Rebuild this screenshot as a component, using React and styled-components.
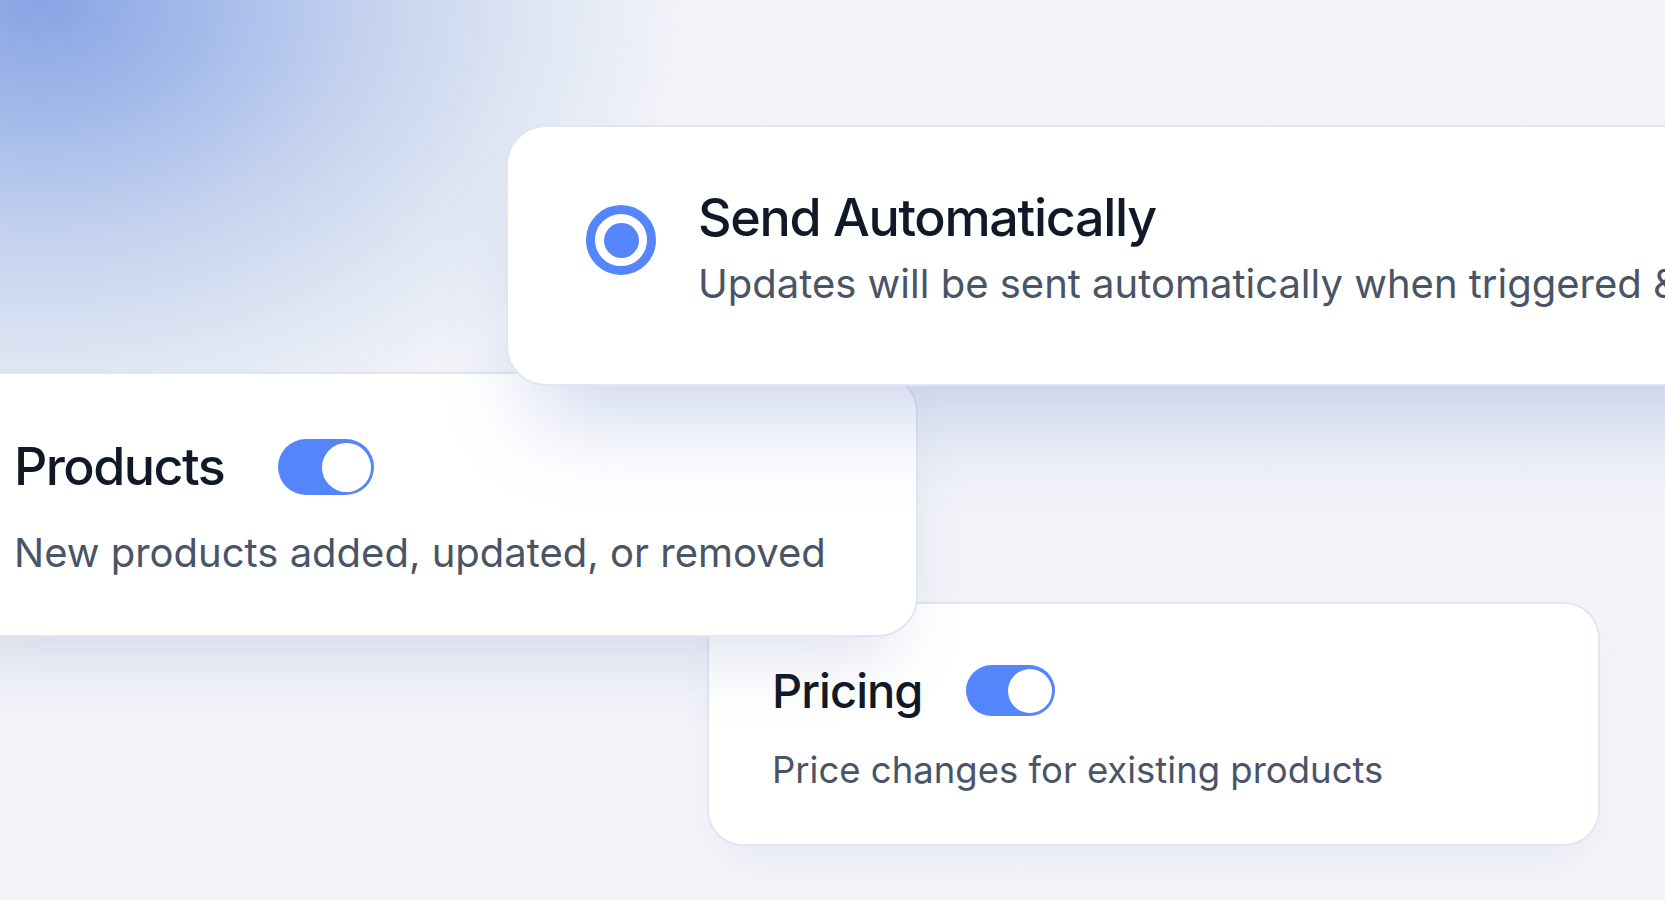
import React from "react";
import styled, { createGlobalStyle } from "styled-components";

const Global = createGlobalStyle`
  html, body { margin: 0; padding: 0; overflow: hidden; }
  body { font-family: Inter, "Noto Sans", sans-serif; }
  * { box-sizing: border-box; }
`;

const Stage = styled.main`
  width: 100vw;
  height: 900px;
  overflow: hidden;
  display: flex;
  flex-direction: column;
  align-items: flex-start;
  background:
    radial-gradient(ellipse 640px 470px at 40px 0px, #87a4e4 0%, #a4bbea 26%, #c6d3ef 52%, #dfe6f3 78%, rgba(238,241,247,0) 100%),
    linear-gradient(180deg, #f1f3f8 0%, #f2f4f8 100%);
`;

const Card = styled.section`
  position: relative;
  z-index: ${(p) => p.$layer};
  flex: none;
  margin-top: ${(p) => p.$top}px;
  margin-left: ${(p) => p.$left}px;
  width: ${(p) => p.$width}px;
  height: ${(p) => p.$height}px;
  padding: ${(p) => p.$padTop}px 0 0 ${(p) => p.$padLeft}px;
  background: #ffffff;
  border: 2px solid #e1e6f1;
  border-radius: ${(p) => p.$radius}px;
  box-shadow: ${(p) => p.$shadow};
`;

const OptionRow = styled.div`
  display: flex;
  align-items: flex-start;
  gap: 42px;
`;

const Radio = styled.span`
  flex: none;
  margin-top: 13px;
  width: 70px;
  height: 70px;
  border-radius: 50%;
  border: 9px solid #5585fb;
  display: flex;
  align-items: center;
  justify-content: center;
  &::after {
    content: "";
    width: 35px;
    height: 35px;
    border-radius: 50%;
    background: #5585fb;
  }
`;

const TextCol = styled.div`
  display: flex;
  flex-direction: column;
`;

const Title = styled.h2`
  margin: 0;
  font-family: Inter, "Noto Sans", sans-serif;
  font-size: ${(p) => p.$size}px;
  line-height: 1;
  font-weight: 500;
  letter-spacing: ${(p) => p.$track}em;
  color: #111827;
  white-space: nowrap;
`;

const Desc = styled.p`
  margin: ${(p) => p.$gap}px 0 0;
  font-family: Inter, "Noto Sans", sans-serif;
  font-size: ${(p) => p.$size}px;
  line-height: 1;
  font-weight: 400;
  color: #4a5467;
  white-space: nowrap;
`;

const HeadRow = styled.div`
  display: flex;
  align-items: center;
  gap: ${(p) => p.$gap}px;
`;

const Toggle = styled.span`
  flex: none;
  position: relative;
  width: ${(p) => p.$w}px;
  height: ${(p) => p.$h}px;
  border-radius: 999px;
  background: #5585fb;
  &::after {
    content: "";
    position: absolute;
    top: 4px;
    right: 3px;
    width: ${(p) => p.$h - 7}px;
    height: ${(p) => p.$h - 7}px;
    border-radius: 50%;
    background: #ffffff;
  }
`;

export default function App() {
  return (
    <>
      <Global />
      <Stage>
        <Card
          $layer={3}
          $top={125}
          $left={506}
          $width={1300}
          $height={261}
          $padTop={65}
          $padLeft={78}
          $radius={40}
          $shadow="0 60px 90px -30px rgba(84, 116, 196, 0.30)"
        >
          <OptionRow>
            <Radio />
            <TextCol>
              <Title $size={52} $track={-0.025}>Send Automatically</Title>
              <Desc $size={40} $gap={20}>
                Updates will be sent automatically when triggered &amp; approved
              </Desc>
            </TextCol>
          </OptionRow>
        </Card>

        <Card
          $layer={2}
          $top={-14}
          $left={-60}
          $width={978}
          $height={265}
          $padTop={65}
          $padLeft={72}
          $radius={40}
          $shadow="0 40px 70px -25px rgba(90, 110, 170, 0.22)"
        >
          <HeadRow $gap={54}>
            <Title $size={52} $track={-0.03}>Products</Title>
            <Toggle $w={96} $h={56} />
          </HeadRow>
          <Desc $size={40} $gap={38}>
            New products added, updated, or removed
          </Desc>
        </Card>

        <Card
          $layer={1}
          $top={-35}
          $left={707}
          $width={893}
          $height={244}
          $padTop={61}
          $padLeft={63}
          $radius={36}
          $shadow="0 24px 50px -25px rgba(90, 110, 170, 0.14)"
        >
          <HeadRow $gap={43}>
            <Title $size={47} $track={-0.02}>Pricing</Title>
            <Toggle $w={89} $h={51} />
          </HeadRow>
          <Desc $size={36.5} $gap={36}>
            Price changes for existing products
          </Desc>
        </Card>
      </Stage>
    </>
  );
}
